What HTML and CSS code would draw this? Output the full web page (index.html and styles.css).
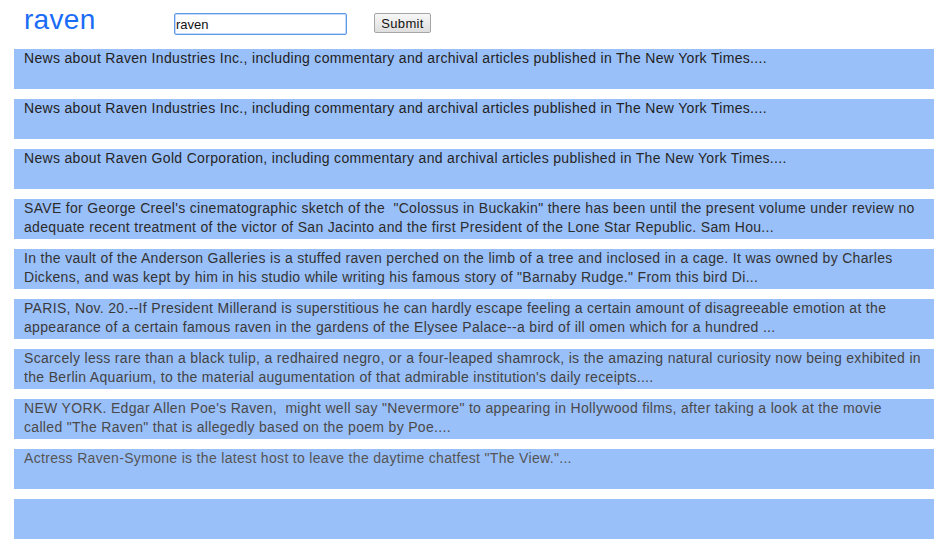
FILE: index.html
```html
<!DOCTYPE html>
<html lang="en">
<head>
<meta charset="utf-8">
<title>raven</title>
<link rel="stylesheet" href="styles.css">
</head>
<body>
<div class="page">
  <header class="header">
    <div class="logo">raven</div>
    <form class="search">
      <input class="search-input" type="text" value="raven">
      <button class="submit" type="button">Submit</button>
    </form>
  </header>
  <div class="results">
    <div class="item shade-1">News about Raven Industries Inc., including commentary and archival articles published in The New York Times....</div>
    <div class="item shade-1">News about Raven Industries Inc., including commentary and archival articles published in The New York Times....</div>
    <div class="item shade-2">News about Raven Gold Corporation, including commentary and archival articles published in The New York Times....</div>
    <div class="item shade-3">SAVE for George Creel's cinematographic sketch of the &nbsp;"Colossus in Buckakin" there has been until the present volume under review no adequate recent treatment of the victor of San Jacinto and the first President of the Lone Star Republic. Sam Hou...</div>
    <div class="item shade-4">In the vault of the Anderson Galleries is a stuffed raven perched on the limb of a tree and inclosed in a cage. It was owned by Charles Dickens, and was kept by him in his studio while writing his famous story of "Barnaby Rudge." From this bird Di...</div>
    <div class="item shade-5">PARIS, Nov. 20.--If President Millerand is superstitious he can hardly escape feeling a certain amount of disagreeable emotion at the appearance of a certain famous raven in the gardens of the Elysee Palace--a bird of ill omen which for a hundred ...</div>
    <div class="item shade-6">Scarcely less rare than a black tulip, a redhaired negro, or a four-leaped shamrock, is the amazing natural curiosity now being exhibited in the Berlin Aquarium, to the material augumentation of that admirable institution's daily receipts....</div>
    <div class="item shade-7">NEW YORK. Edgar Allen Poe's Raven, &nbsp;might well say "Nevermore" to appearing in Hollywood films, after taking a look at the movie called "The Raven" that is allegedly based on the poem by Poe....</div>
    <div class="item shade-8">Actress Raven-Symone is the latest host to leave the daytime chatfest "The View."...</div>
    <div class="item"></div>
  </div>
</div>
</body>
</html>
```
FILE: styles.css
```css
html, body {
  margin: 0;
  padding: 0;
  background: #ffffff;
}

.page {
  width: 920px;
  margin-left: 14px;
  font-family: "Liberation Sans", Arial, sans-serif;
}

.header {
  display: flex;
  align-items: flex-start;
  height: 49px;
}

.logo {
  width: 150px;
  padding-left: 10px;
  box-sizing: border-box;
  margin-top: 4px;
  font-size: 28px;
  line-height: 32px;
  color: #1a6cf7;
  letter-spacing: 0.3px;
}

.search {
  display: flex;
  align-items: flex-start;
  gap: 27px;
  margin: 13px 0 0 10px;
}

.search-input {
  box-sizing: border-box;
  width: 173px;
  height: 22px;
  margin: 0;
  padding: 0 1px;
  border: 1px solid #5f9be8;
  box-shadow: 0 0 0 1px #c3d9f7 inset;
  border-radius: 2px;
  font-family: "Liberation Sans", Arial, sans-serif;
  font-size: 13px;
  color: #111;
  outline: none;
}

.submit {
  box-sizing: border-box;
  width: 57px;
  height: 20px;
  margin: 0;
  padding: 0;
  border: 1px solid #a5a5a5;
  border-radius: 2px;
  background: linear-gradient(#f7f7f7, #dedede);
  font-family: "Liberation Sans", Arial, sans-serif;
  font-size: 13px;
  color: #111;
  letter-spacing: 0.3px;
}

.results {
  display: flex;
  flex-direction: column;
  gap: 10px;
}

.item {
  box-sizing: border-box;
  height: 40px;
  padding: 0 10px;
  background: #9ac0fa;
  font-size: 14px;
  line-height: 19px;
  letter-spacing: 0.32px;
  color: #222;
  overflow: hidden;
}

.shade-1 { color: #222222; }
.shade-2 { color: #262626; }
.shade-3 { color: #2c2c2c; }
.shade-4 { color: #333333; }
.shade-5 { color: #3a3a3a; }
.shade-6 { color: #444444; }
.shade-7 { color: #4a4a4a; }
.shade-8 { color: #555555; }
```
